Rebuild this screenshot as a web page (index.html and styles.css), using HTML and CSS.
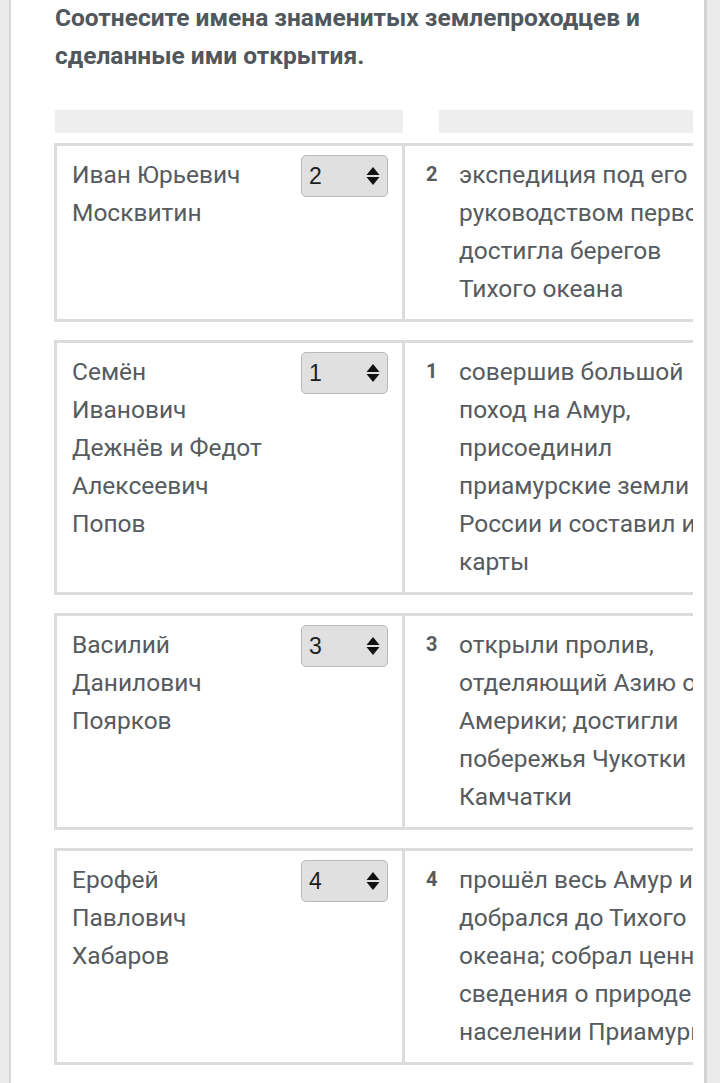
FILE: index.html
```html
<!DOCTYPE html>
<html lang="ru">
<head>
<meta charset="utf-8">
<title>Соотнесите</title>
<link rel="stylesheet" href="styles.css">
</head>
<body>
<div class="card">
  <h2 class="title">Соотнесите имена знаменитых землепроходцев и сделанные ими открытия.</h2>
  <div class="matrix">
    <div class="head"><div class="hbar hbar-left"></div><div class="hbar hbar-right"></div></div>
    <div class="rows">
      <div class="row">
        <div class="left"><div class="name">Иван Юрьевич Москвитин</div><div class="select"><span class="val">2</span><svg class="arr" width="14" height="20" viewBox="0 0 14 20"><path d="M7 1 L13.5 9 H0.5 Z M7 19 L13.5 11 H0.5 Z" fill="#111"/></svg></div></div>
        <div class="right"><div class="num">2</div><div class="desc">экспедиция под его руководством первой достигла берегов Тихого океана</div></div>
      </div>
      <div class="row">
        <div class="left"><div class="name">Семён Иванович Дежнёв и Федот Алексеевич Попов</div><div class="select"><span class="val">1</span><svg class="arr" width="14" height="20" viewBox="0 0 14 20"><path d="M7 1 L13.5 9 H0.5 Z M7 19 L13.5 11 H0.5 Z" fill="#111"/></svg></div></div>
        <div class="right"><div class="num">1</div><div class="desc">совершив большой поход на Амур, присоединил приамурские земли России и составил их карты</div></div>
      </div>
      <div class="row">
        <div class="left"><div class="name">Василий Данилович Поярков</div><div class="select"><span class="val">3</span><svg class="arr" width="14" height="20" viewBox="0 0 14 20"><path d="M7 1 L13.5 9 H0.5 Z M7 19 L13.5 11 H0.5 Z" fill="#111"/></svg></div></div>
        <div class="right"><div class="num">3</div><div class="desc">открыли пролив, отделяющий Азию от Америки; достигли побережья Чукотки и Камчатки</div></div>
      </div>
      <div class="row">
        <div class="left"><div class="name">Ерофей Павлович Хабаров</div><div class="select"><span class="val">4</span><svg class="arr" width="14" height="20" viewBox="0 0 14 20"><path d="M7 1 L13.5 9 H0.5 Z M7 19 L13.5 11 H0.5 Z" fill="#111"/></svg></div></div>
        <div class="right"><div class="num">4</div><div class="desc">прошёл весь Амур и добрался до Тихого океана; собрал ценные сведения о природе и населении Приамурья.</div></div>
      </div>
    </div>
  </div>
</div>
</body>
</html>
```
FILE: styles.css
```css
html, body {
  margin: 0;
  padding: 0;
}
body {
  background: #ebebeb;
  font-family: Roboto, "Noto Sans", sans-serif;
  color: #565b60;
  height: 1083px;
  overflow: hidden;
}
.card {
  display: flow-root;
  margin-left: 9px;
  width: 698px;
  min-height: 1100px;
  background: #fff;
  border-left: 2px solid #d8d8d8;
  border-right: 3px solid #d2d2d2;
  padding-left: 43px;
  box-sizing: border-box;
}
.title {
  margin: -1px 0 0 1px;
  font-size: 24.5px;
  line-height: 38px;
  font-weight: 700;
  color: #50575d;
  width: 610px;
}
.matrix {
  width: 639px;
  overflow: hidden;
  margin-top: 35px;
}
.head {
  display: flex;
  height: 23px;
}
.hbar {
  background: #eeeeee;
  height: 23px;
}
.hbar-left {
  margin-left: 1px;
  width: 348px;
}
.hbar-right {
  margin-left: 36px;
  flex: 1;
}
.rows {
  display: flex;
  flex-direction: column;
  gap: 18px;
  margin-top: 10px;
}
.row {
  display: flex;
}
.left {
  width: 351px;
  flex-shrink: 0;
  box-sizing: border-box;
  border: 3px solid #dcdcdc;
  padding: 10px 14px 11px 15px;
  display: flex;
  justify-content: space-between;
  align-items: flex-start;
}
.name {
  width: 190px;
  font-size: 24.5px;
  line-height: 38px;
}
.select {
  margin-top: -1px;
  width: 87px;
  height: 42px;
  box-sizing: border-box;
  background: #e0e0e0;
  border: 1px solid #b8b8b8;
  border-radius: 5px;
  display: flex;
  align-items: center;
  justify-content: space-between;
  padding: 0 7px 0 7px;
}
.val {
  font-family: "Liberation Sans", Arial, sans-serif;
  font-size: 23px;
  color: #1e1e1e;
}
.arr {
  display: block;
}
.right {
  width: 340px;
  flex-shrink: 0;
  border-top: 3px solid #dcdcdc;
  border-bottom: 3px solid #dcdcdc;
  padding: 10px 0 11px 21px;
  display: flex;
}
.num {
  width: 33px;
  flex-shrink: 0;
  font-size: 20px;
  font-weight: 700;
  line-height: 36px;
  color: #565b60;
}
.desc {
  width: 280px;
  font-size: 24.5px;
  line-height: 38px;
}
```
